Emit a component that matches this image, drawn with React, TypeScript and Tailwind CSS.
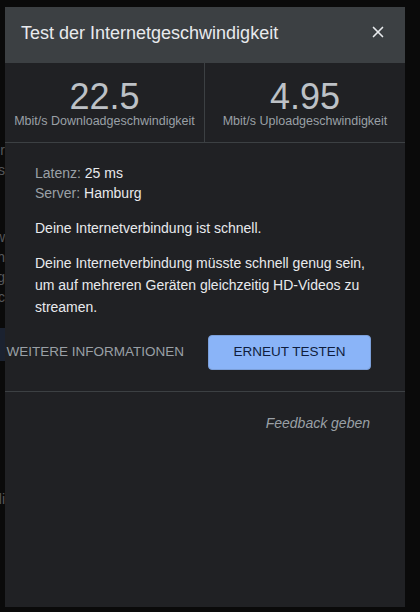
import { X } from "lucide-react";

const font = { fontFamily: '"Liberation Sans", Arial, sans-serif' };

function Stat({ value, label }: { value: string; label: string }) {
  return (
    <div className="flex flex-col items-center pt-[16px]">
      <div className="text-[36px] leading-[36px] text-[#bdc1c6]">{value}</div>
      <div className="text-[12.5px] leading-[12px] text-[#9aa0a6] whitespace-nowrap">{label}</div>
    </div>
  );
}

// the page behind the dialog peeks out on the left edge
function Backdrop() {
  return (
    <div className="w-[5px] h-full shrink-0 overflow-hidden flex flex-col text-[14px] leading-[20px] text-[#55585c]">
      <div className="h-[140px] shrink-0" />
      <div className="h-[20px] flex justify-end whitespace-nowrap">Server</div>
      <div className="h-[22px] flex justify-end whitespace-nowrap">Status</div>
      <div className="h-[45px]" />
      <div className="h-[20px] flex justify-end whitespace-nowrap">Gew</div>
      <div className="h-[20px] flex justify-end whitespace-nowrap">Dach</div>
      <div className="h-[20px] flex justify-end whitespace-nowrap">Weg</div>
      <div className="h-[20px] flex justify-end whitespace-nowrap">Cc</div>
      <div className="h-[21px]" />
      <div className="h-[33px] bg-[#1b2230] shrink-0" />
      <div className="h-[128px]" />
      <div className="h-[20px] flex justify-end whitespace-nowrap">li</div>
    </div>
  );
}

export default function App() {
  return (
    <div className="w-[420px] h-[612px] bg-[#0a0a0a] flex overflow-hidden" style={font}>
      <Backdrop />
      <div className="mt-[7px] w-[400px] h-[600px] shrink-0 bg-[#202124] flex flex-col">
        <div className="h-[56px] shrink-0 bg-[#3c4043] flex items-center justify-between pl-[16px] pr-[18px]">
          <span className="text-[18px] text-[#e8eaed] mt-[-4px]">Test der Internetgeschwindigkeit</span>
          <X className="w-[18px] h-[18px] text-[#e8eaed] mt-[-7px]" strokeWidth={2.2} />
        </div>

        <div className="h-[80px] shrink-0 grid grid-cols-2 border-b border-[#3c4043]">
          <div className="border-r border-[#3c4043]">
            <Stat value="22.5" label="Mbit/s Downloadgeschwindigkeit" />
          </div>
          <Stat value="4.95" label="Mbit/s Uploadgeschwindigkeit" />
        </div>

        <div className="px-[30px] pt-[20px] text-[14px] text-[#e8eaed]">
          <div className="leading-[20px]">
            <div>
              <span className="text-[#9aa0a6]">Latenz: </span>25 ms
            </div>
            <div>
              <span className="text-[#9aa0a6]">Server: </span>Hamburg
            </div>
          </div>
          <p className="mt-[14px] leading-[22px]">Deine Internetverbindung ist schnell.</p>
          <p className="mt-[13px] leading-[22px] pr-[4px]">
            Deine Internetverbindung müsste schnell genug sein, um auf mehreren Geräten gleichzeitig HD-Videos zu streamen.
          </p>
        </div>

        <div className="mt-[17px] flex items-center justify-end gap-[24px] pr-[34px]">
          <button className="shrink-0 text-[13.5px] text-[#9aa0a6] whitespace-nowrap uppercase">
            Weitere Informationen
          </button>
          <button className="shrink-0 w-[163px] h-[35px] rounded-[4px] border border-[#7b9fd9] bg-[#8ab4f8] text-[13.5px] text-[#0f1d3d] uppercase">
            Erneut testen
          </button>
        </div>

        <div className="mt-[21px] border-t border-[#3c4043] pt-[21px] pr-[35px] flex justify-end">
          <span className="text-[14px] leading-[20px] italic text-[#9aa0a6]">Feedback geben</span>
        </div>
      </div>
    </div>
  );
}
